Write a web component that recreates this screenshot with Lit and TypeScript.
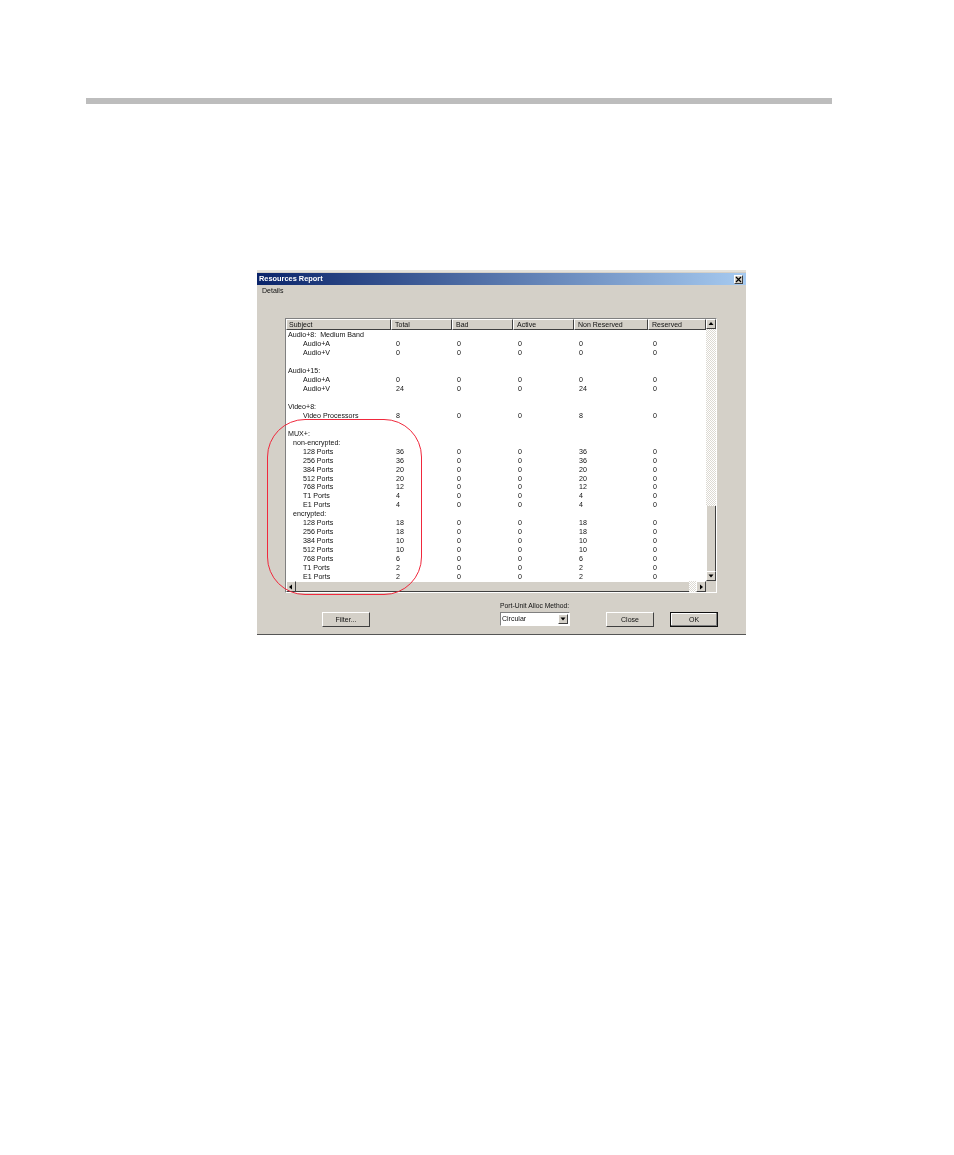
import { LitElement, html, css, svg } from "lit";
import { customElement } from "lit/decorators.js";

type Row = { label?: string; indent?: 0 | 1 | 2; v?: [string, string, string, string, string] };

const r = (label: string, total: string): Row => ({
  label,
  indent: 2,
  v: [total, "0", "0", total, "0"],
});

const ROWS: Row[] = [
  { label: "Audio+8:  Medium Band", indent: 0 },
  r("Audio+A", "0"),
  r("Audio+V", "0"),
  {},
  { label: "Audio+15:", indent: 0 },
  r("Audio+A", "0"),
  { label: "Audio+V", indent: 2, v: ["24", "0", "0", "24", "0"] },
  {},
  { label: "Video+8:", indent: 0 },
  r("Video Processors", "8"),
  {},
  { label: "MUX+:", indent: 0 },
  { label: "non-encrypted:", indent: 1 },
  r("128 Ports", "36"),
  r("256 Ports", "36"),
  r("384 Ports", "20"),
  r("512 Ports", "20"),
  r("768 Ports", "12"),
  r("T1 Ports", "4"),
  r("E1 Ports", "4"),
  { label: "encrypted:", indent: 1 },
  r("128 Ports", "18"),
  r("256 Ports", "18"),
  r("384 Ports", "10"),
  r("512 Ports", "10"),
  r("768 Ports", "6"),
  r("T1 Ports", "2"),
  r("E1 Ports", "2"),
];

const HEADERS = ["Subject", "Total", "Bad", "Active", "Non Reserved", "Reserved"];

const arrow = (d: "up" | "down" | "left" | "right") => {
  const pts = {
    up: "4,2 1.5,5 6.5,5",
    down: "1.5,2.5 6.5,2.5 4,5.5",
    left: "5,1.5 5,6.5 2,4",
    right: "3,1.5 3,6.5 6,4",
  }[d];
  return html`<svg class="arrow" viewBox="0 0 8 8" width="8" height="8">${svg`<polygon points=${pts} fill="#000"></polygon>`}</svg>`;
};

@customElement("app-root")
export class AppRoot extends LitElement {
  static styles = css`
    :host {
      display: block;
      height: 1155px;
      background: #fff;
      font-family: "Liberation Sans", Arial, sans-serif;
      color: #111;
      overflow: hidden;
    }
    .rule {
      margin: 98px 0 0 86px;
      width: 746px;
      height: 6px;
      background: #bdbdbd;
    }
    .dialog {
      position: relative;
      margin: 166px 0 0 257px;
      width: 489px;
      height: 365px;
      box-sizing: border-box;
      background: #d4d0c8;
      border-top: 2px solid #e4e2dc;
      border-bottom: 1px solid #555;
      display: flex;
      flex-direction: column;
      filter: blur(0.28px);
    }
    .title {
      height: 12px;
      margin-top: 1px;
      background: linear-gradient(90deg, #0a246a 0%, #a6caf0 100%);
      display: flex;
      align-items: center;
      justify-content: space-between;
      padding: 0 3px 0 2px;
      color: #fff;
      font-weight: bold;
      font-size: 7.4px;
      line-height: 12px;
    }
    .x {
      width: 9px;
      height: 9px;
      background: #d4d0c8;
      border: 1px solid;
      border-color: #fff #404040 #404040 #fff;
      box-sizing: border-box;
      display: flex;
    }
    .x svg {
      width: 7px;
      height: 7px;
    }
    .menu {
      font-size: 7px;
      line-height: 9px;
      padding: 1px 0 0 5px;
      height: 9px;
    }
    .panel {
      margin: 23px 0 0 28px;
      width: 432px;
      height: 275px;
      box-sizing: border-box;
      border: 1px solid;
      border-color: #808080 #fff #fff #808080;
      position: relative;
      display: grid;
      grid-template-columns: 420px 10px;
      grid-template-rows: 262px 11px;
      background: #fff;
    }
    .main {
      display: flex;
      flex-direction: column;
      min-width: 0;
    }
    .head,
    .row {
      display: grid;
      grid-template-columns: 105px 61px 61px 61px 74px 58px;
    }
    .head {
      height: 11px;
    }
    .hc {
      background: #d4d0c8;
      box-sizing: border-box;
      border-right: 1px solid #404040;
      border-bottom: 1px solid #404040;
      border-top: 1px solid #fff;
      border-left: 1px solid #fff;
      font-size: 7px;
      line-height: 10px;
      padding-left: 3px;
      white-space: nowrap;
      overflow: hidden;
    }
    .hc:first-child {
      padding-left: 2px;
    }
    .rows {
      padding-top: 1px;
      display: grid;
      grid-auto-rows: 8.97px;
    }
    .row {
      font-size: 7.1px;
      line-height: 8.97px;
      white-space: pre;
    }
    .subject.i0 {
      padding-left: 2px;
    }
    .subject.i1 {
      padding-left: 7px;
    }
    .subject.i2 {
      padding-left: 17px;
    }
    .val {
      padding-left: 5px;
    }
    .vbar {
      display: flex;
      flex-direction: column;
      background: repeating-conic-gradient(#dcd9d2 0 25%, #fff 0 50%) 0 0 / 2px 2px;
    }
    .btn {
      box-sizing: border-box;
      background: #d4d0c8;
      border: 1px solid;
      border-color: #fff #404040 #404040 #fff;
      display: flex;
      align-items: center;
      justify-content: center;
      flex: none;
    }
    .arrow {
      display: block;
      flex: none;
    }
    .vbtn {
      height: 10px;
    }
    .vspace {
      flex: 1;
    }
    .vthumb {
      height: 65px;
      box-sizing: border-box;
      background: #d4d0c8;
      border-right: 1px solid #404040;
      border-left: 1px solid #fff;
    }
    .hbar {
      display: flex;
      background: repeating-conic-gradient(#dcd9d2 0 25%, #fff 0 50%) 0 0 / 2px 2px;
    }
    .hbtn {
      width: 10px;
    }
    .hthumb {
      width: 393px;
      box-sizing: border-box;
      background: #d4d0c8;
      border-top: 1px solid #fff;
      border-bottom: 1px solid #404040;
    }
    .hspace {
      flex: 1;
    }
    .corner {
      background: #d4d0c8;
    }
    .footer {
      margin-top: 10px;
      display: flex;
      align-items: flex-start;
      padding-left: 65px;
      font-size: 7px;
    }
    .push {
      height: 15px;
      box-sizing: border-box;
      width: 48px;
      background: #d4d0c8;
      border: 1px solid;
      border-color: #fff #404040 #404040 #fff;
      text-align: center;
      line-height: 13px;
      margin-top: 9px;
    }
    .filter {
      margin-right: 130px;
    }
    .method {
      width: 70px;
      margin-right: 36px;
    }
    .method .label {
      font-size: 6.75px;
      line-height: 8px;
      margin-top: -1px;
      margin-bottom: 2px;
      white-space: nowrap;
    }
    .select {
      height: 14px;
      box-sizing: border-box;
      background: #fff;
      display: flex;
      align-items: center;
      justify-content: space-between;
      padding: 0 1px 0 1px;
      border: 1px solid;
      border-color: #808080 #fff #fff #808080;
      line-height: 14px;
    }
    .select .btn {
      width: 10px;
      height: 10px;
    }
    .close {
      margin-right: 16px;
    }
    .ok {
      border: 1px solid #111;
      box-shadow: inset -1px -1px 0 #808080, inset 1px 1px 0 #fff;
    }
    .circle {
      position: absolute;
      left: 10px;
      top: 147px;
      width: 155px;
      height: 176px;
      box-sizing: border-box;
      border: 1px solid #f0283c;
      border-radius: 38px;
      pointer-events: none;
    }
  `;

  render() {
    return html`
      <div class="rule"></div>
      <div class="dialog">
        <div class="title">
          <span>Resources Report</span>
          <span class="x">
            <svg viewBox="0 0 7 7"><path d="M1 1 L6 6 M6 1 L1 6" stroke="#000" stroke-width="1.2"></path></svg>
          </span>
        </div>
        <div class="menu">Details</div>
        <div class="panel">
          <div class="main">
            <div class="head">
              ${HEADERS.map((h) => html`<div class="hc">${h}</div>`)}
            </div>
            <div class="rows">
              ${ROWS.map(
                (row) => html`<div class="row">
                  <div class="subject i${row.indent ?? 0}">${row.label ?? ""}</div>
                  ${(row.v ?? ["", "", "", "", ""]).map((v) => html`<div class="val">${v}</div>`)}
                </div>`,
              )}
            </div>
          </div>
          <div class="vbar">
            <div class="btn vbtn">${arrow("up")}</div>
            <div class="vspace"></div>
            <div class="vthumb"></div>
            <div class="btn vbtn">${arrow("down")}</div>
          </div>
          <div class="hbar">
            <div class="btn hbtn">${arrow("left")}</div>
            <div class="hthumb"></div>
            <div class="hspace"></div>
            <div class="btn hbtn">${arrow("right")}</div>
          </div>
          <div class="corner"></div>
        </div>
        <div class="footer">
          <div class="push filter">Filter...</div>
          <div class="method">
            <div class="label">Port-Unit Alloc Method:</div>
            <div class="select">
              <span>Circular</span>
              <span class="btn">${arrow("down")}</span>
            </div>
          </div>
          <div class="push close">Close</div>
          <div class="push ok">OK</div>
        </div>
        <div class="circle"></div>
      </div>
    `;
  }
}
